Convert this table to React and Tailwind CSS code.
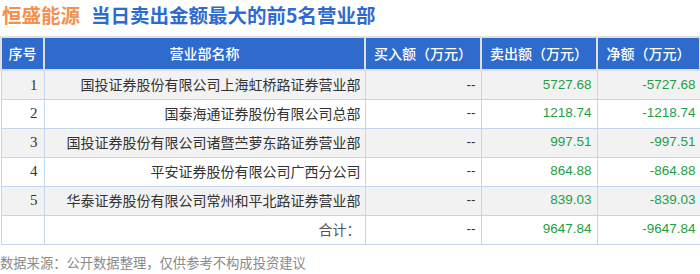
import React from "react";

const rows = [
  { i: "1", name: "国投证券股份有限公司上海虹桥路证券营业部", sell: "5727.68", net: "-5727.68" },
  { i: "2", name: "国泰海通证券股份有限公司总部", sell: "1218.74", net: "-1218.74" },
  { i: "3", name: "国投证券股份有限公司诸暨苎萝东路证券营业部", sell: "997.51", net: "-997.51" },
  { i: "4", name: "平安证券股份有限公司广西分公司", sell: "864.88", net: "-864.88" },
  { i: "5", name: "华泰证券股份有限公司常州和平北路证券营业部", sell: "839.03", net: "-839.03" },
];

const cjk = { fontFamily: '"Noto Sans CJK SC", "Noto Sans", sans-serif' };
const num = { fontFamily: '"Liberation Sans", Arial, sans-serif' };
const serif = { fontFamily: '"Liberation Serif", "Times New Roman", serif' };

export default function App() {
  return (
    <div className="relative w-[700px] h-[274px] bg-white overflow-hidden" style={cjk}>
      <div className="h-[36px] flex items-center pl-[2px] pb-[6px] font-bold text-[19.5px] leading-none">
        <span className="text-[#f6904f]">恒盛能源</span>
        <span className="text-[#2e6bd0] ml-[11px]">当日卖出金额最大的前5名营业部</span>
      </div>
      <table className="table-fixed border-collapse w-[699px]">
        <colgroup>
          <col className="w-[43px]" />
          <col className="w-[321px]" />
          <col className="w-[116px]" />
          <col className="w-[116px]" />
          <col className="w-[103px]" />
        </colgroup>
        <thead>
          <tr className="h-[33px]">
            <th className="border-2 border-[#dedede] bg-[#2f6bcc] text-white text-[14px] font-medium">序号</th>
            <th className="border-2 border-[#dedede] bg-[#2f6bcc] text-white text-[14px] font-medium">营业部名称</th>
            <th className="border-2 border-[#dedede] bg-[#2f6bcc] text-white text-[14px] font-medium">买入额（万元）</th>
            <th className="border-2 border-[#dedede] bg-[#2f6bcc] text-white text-[14px] font-medium">卖出额（万元）</th>
            <th className="border-2 border-[#dedede] bg-[#2f6bcc] text-white text-[14px] font-medium">净额（万元）</th>
          </tr>
        </thead>
        <tbody>
          {rows.map((r, k) => (
            <tr key={r.i} className={"h-[29px] " + (k % 2 === 0 ? "bg-[#f2f2f2]" : "bg-white")}>
              <td className="border border-[#c3d6ec] text-right pr-[6px] text-[15px] text-[#333]" style={serif}>{r.i}</td>
              <td className="border border-[#c3d6ec] text-right pr-[4px] text-[14px] text-[#333] whitespace-nowrap">{r.name}</td>
              <td className="border border-[#c3d6ec] text-right pr-[5px] text-[13.5px] text-[#333]" style={num}>--</td>
              <td className="border border-[#c3d6ec] text-right pr-[5px] text-[13.5px] text-[#1e9e46]" style={num}>{r.sell}</td>
              <td className="border border-[#c3d6ec] text-right pr-[4px] text-[13.5px] text-[#1e9e46]" style={num}>{r.net}</td>
            </tr>
          ))}
          <tr className="h-[29px] bg-white">
            <td className="border border-[#c3d6ec]"></td>
            <td className="border border-[#c3d6ec] text-right pr-[4px] text-[14px] text-[#555]">合计：</td>
            <td className="border border-[#c3d6ec] text-right pr-[5px] text-[13.5px] text-[#333]" style={num}>--</td>
            <td className="border border-[#c3d6ec] text-right pr-[5px] text-[13.5px] text-[#1e9e46]" style={num}>9647.84</td>
            <td className="border border-[#c3d6ec] text-right pr-[4px] text-[13.5px] text-[#1e9e46]" style={num}>-9647.84</td>
          </tr>
        </tbody>
      </table>
      <div className="mt-[11px] text-[13.3px] text-[#8a8a8a] leading-none">数据来源：公开数据整理，仅供参考不构成投资建议</div>
    </div>
  );
}
